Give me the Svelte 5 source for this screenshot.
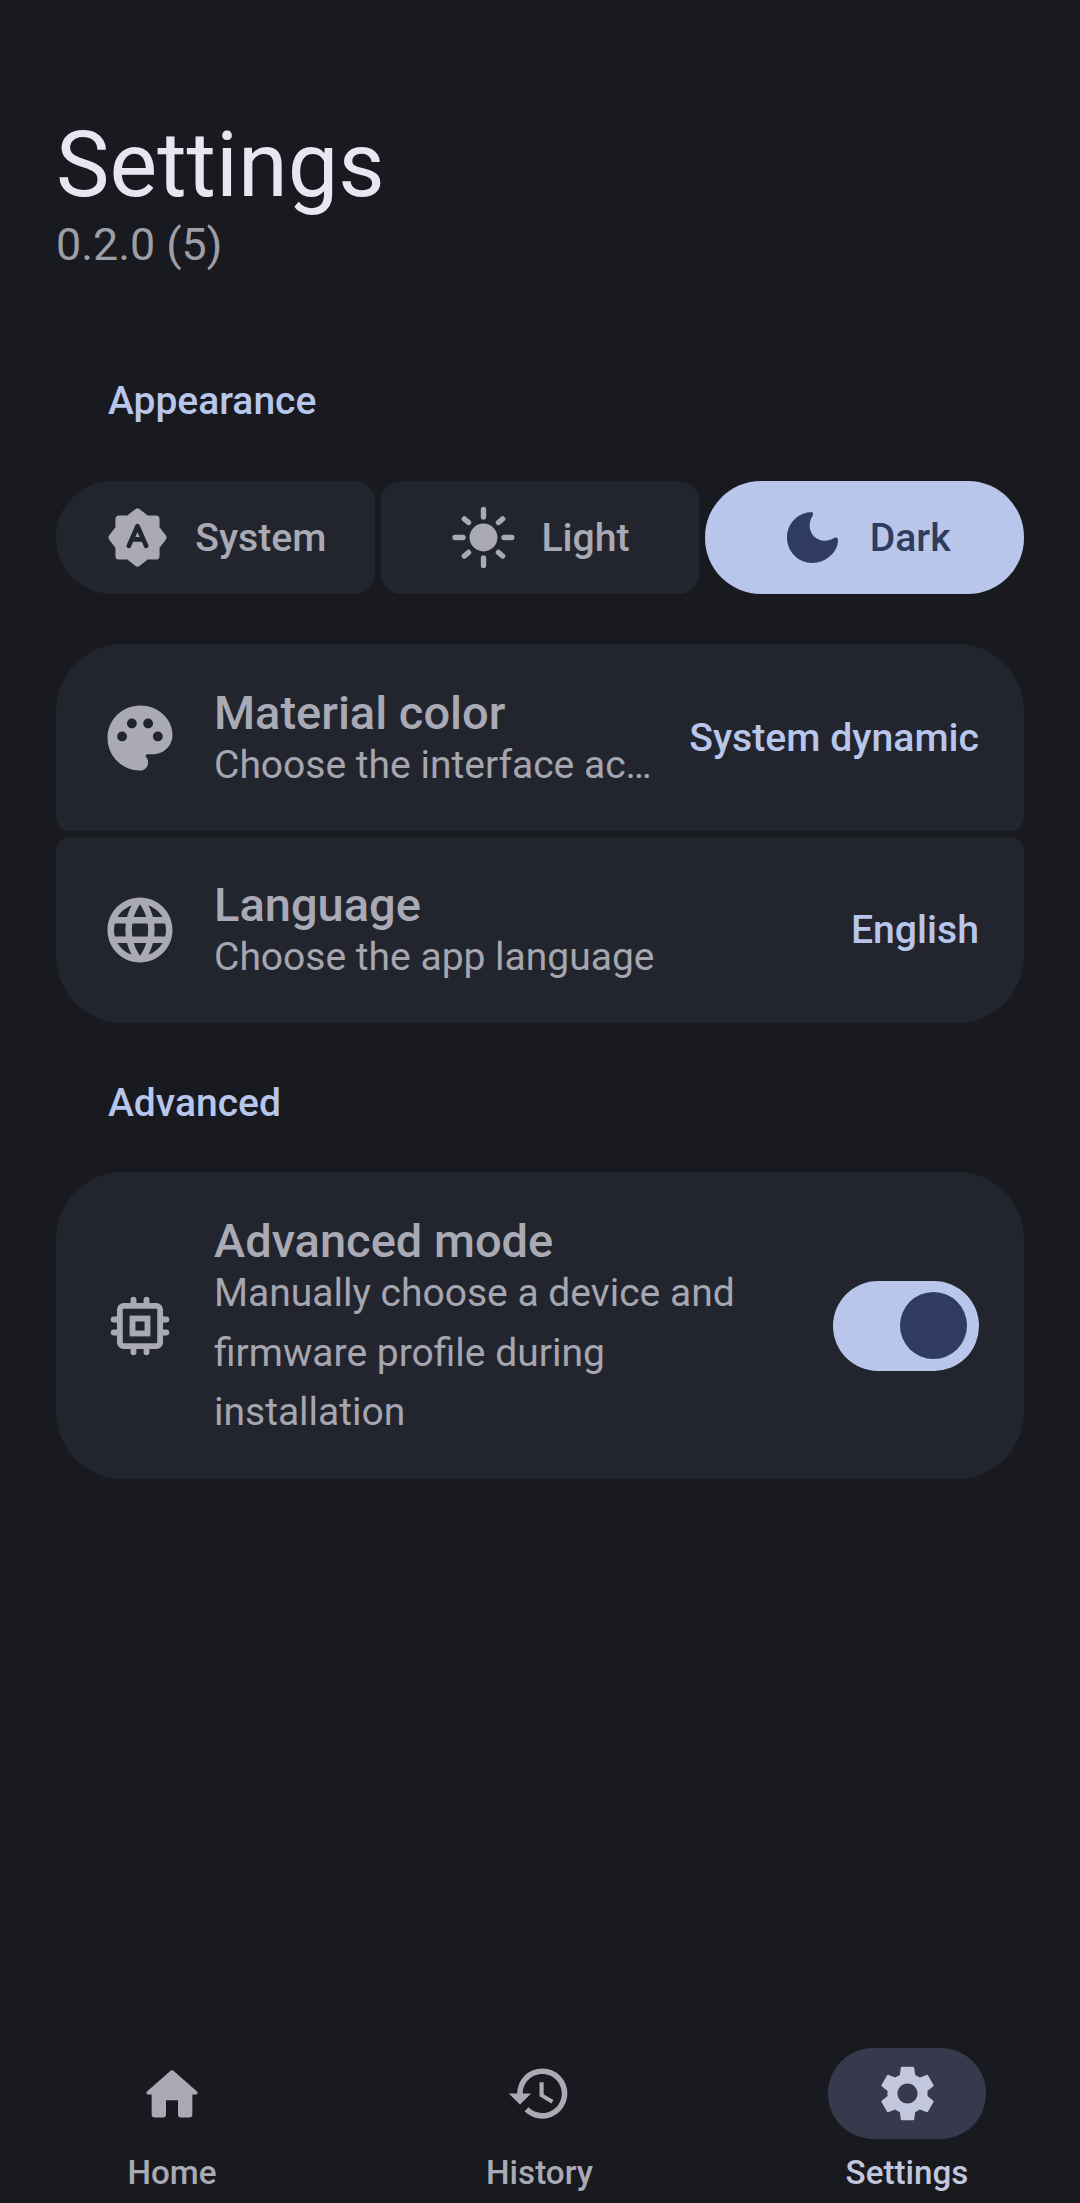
<script>
  let themes = [
    { id: 'system', label: 'System' },
    { id: 'light', label: 'Light' },
    { id: 'dark', label: 'Dark' }
  ];
  let selected = 'dark';
  let advanced = true;
</script>

<div class="page">
  <header class="head">
    <h1>Settings</h1>
    <p class="version">0.2.0 (5)</p>
  </header>

  <h2 class="section first">Appearance</h2>

  <div class="themes">
    {#each themes as theme}
      <button class="theme {theme.id}" class:active={selected === theme.id} on:click={() => (selected = theme.id)}>
        {#if theme.id === 'system'}
          <svg class="icon" viewBox="0 0 24 24">
            <path class="star" d="M12 2.9L15.2 5.4H18.6V8.8L21.1 12L18.6 15.2V18.6H15.2L12 21.1L8.8 18.6H5.4V15.2L2.9 12L5.4 8.8V5.4H8.8Z" />
            <path class="letter" d="M8.9 15L12 8L15.1 15M10 12.7H14" />
          </svg>
        {:else if theme.id === 'light'}
          <svg class="icon" viewBox="0 0 67.2 67.2">
            <circle cx="33.6" cy="33.6" r="14" fill="currentColor" />
            <path class="rays" d="M33.6 5.4V13M33.6 54.2V61.8M5 33.6H13M54.2 33.6H62M14.4 15L18.6 18.6M48.6 48.6L52.8 52.2M14.4 52.2L18.6 48.6M48.6 18.6L52.8 15" />
          </svg>
        {:else}
          <svg class="icon" viewBox="28 43 201 201">
            <path fill="currentColor" d="M128 67C86 67 52 101 52 143.5C52 186 86 220 128 220C170 220 205 186 205 152C205 144 198 141 193 145C184 151 175 153 165 153C140 153 120 133 120 108C120 98 123 88 128 80C132 73 130 67 125 67Z" />
          </svg>
        {/if}
        <span>{theme.label}</span>
      </button>
    {/each}
  </div>

  <div class="card top">
    <svg class="row-icon" viewBox="0 0 24 24">
      <path fill="currentColor" d="M12 2C6.49 2 2 6.49 2 12s4.49 10 10 10c1.38 0 2.5-1.12 2.5-2.5 0-.61-.23-1.2-.64-1.67-.08-.1-.13-.21-.13-.33 0-.28.22-.5.5-.5H16c3.31 0 6-2.69 6-6 0-4.96-4.49-9-10-9zm5.5 11c-.83 0-1.5-.67-1.5-1.5s.67-1.5 1.5-1.5 1.5.67 1.5 1.5-.67 1.5-1.5 1.5zm-3-4c-.83 0-1.5-.67-1.5-1.5S13.67 6 14.5 6s1.5.67 1.5 1.5S15.33 9 14.5 9zM5 11.5c0-.83.67-1.5 1.5-1.5s1.5.67 1.5 1.5S7.33 13 6.5 13 5 12.33 5 11.5zm6-4c0 .83-.67 1.5-1.5 1.5S8 8.33 8 7.5 8.67 6 9.5 6s1.5.67 1.5 1.5z" />
    </svg>
    <div class="text">
      <div class="title">Material color</div>
      <div class="sub nowrap">Choose the interface accent color</div>
    </div>
    <div class="value">System dynamic</div>
  </div>

  <div class="card bottom">
    <svg class="row-icon" viewBox="0 0 24 24">
      <path fill="currentColor" d="M11.99 2C6.47 2 2 6.48 2 12s4.47 10 9.99 10C17.52 22 22 17.52 22 12S17.52 2 11.99 2zm6.93 6h-2.95c-.32-1.25-.78-2.45-1.38-3.56 1.84.63 3.37 1.91 4.33 3.56zM12 4.04c.83 1.2 1.48 2.53 1.91 3.96h-3.82c.43-1.43 1.08-2.76 1.91-3.96zM4.26 14C4.1 13.36 4 12.69 4 12s.1-1.36.26-2h3.38c-.08.66-.14 1.32-.14 2s.06 1.34.14 2H4.26zm.82 2h2.95c.32 1.25.78 2.45 1.38 3.56-1.84-.63-3.37-1.9-4.33-3.56zm2.95-8H5.08c.96-1.66 2.49-2.93 4.33-3.56C8.81 5.55 8.35 6.75 8.03 8zM12 19.96c-.83-1.2-1.48-2.53-1.91-3.96h3.82c-.43 1.43-1.08 2.76-1.91 3.96zM14.34 14H9.66c-.09-.66-.16-1.32-.16-2s.07-1.35.16-2h4.68c.09.65.16 1.32.16 2s-.07 1.34-.16 2zm.25 5.56c.6-1.11 1.06-2.31 1.38-3.56h2.95c-.96 1.65-2.49 2.93-4.33 3.56zM16.36 14c.08-.66.14-1.32.14-2s-.06-1.34-.14-2h3.38c.16.64.26 1.31.26 2s-.1 1.36-.26 2h-3.38z" />
    </svg>
    <div class="text">
      <div class="title">Language</div>
      <div class="sub nowrap">Choose the app language</div>
    </div>
    <div class="value">English</div>
  </div>

  <h2 class="section second">Advanced</h2>

  <div class="card single">
    <svg class="row-icon chip" viewBox="0 0 24 24">
      <rect x="5.8" y="5.8" width="12.4" height="12.4" rx="1.2" />
      <rect x="9.7" y="9.7" width="4.6" height="4.6" />
      <path d="M10 3.9V5M14 3.9V5M10 19V20.1M14 19V20.1M3.9 10H5M3.9 14H5M19 10H20.1M19 14H20.1" />
    </svg>
    <div class="text">
      <div class="title">Advanced mode</div>
      <div class="sub">Manually choose a device and firmware profile during installation</div>
    </div>
    <button class="toggle" class:on={advanced} aria-label="Advanced mode" on:click={() => (advanced = !advanced)}>
      <span class="thumb"></span>
    </button>
  </div>

  <nav class="nav">
    <div class="nav-item">
      <div class="nav-icon">
        <svg width="52" height="48" viewBox="258 145 156 143">
          <path fill="currentColor" d="M330 148q6-5 12 0L411 209q5 7-3 9H397V278q0 9-9 9H363q-9 0-9-9V235H318V278q0 9-9 9H284q-9 0-9-9V218H264q-8-2-3-9Z" />
        </svg>
      </div>
      <span>Home</span>
    </div>
    <div class="nav-item">
      <div class="nav-icon">
        <svg width="67" height="67" viewBox="0 0 24 24">
          <path fill="currentColor" d="M13 3a9 9 0 0 0-9 9H1l3.89 3.89.07.14L9 12H6c0-3.87 3.13-7 7-7s7 3.13 7 7-3.13 7-7 7c-1.93 0-3.68-.79-4.94-2.06l-1.42 1.42A8.954 8.954 0 0 0 13 21a9 9 0 0 0 0-18zm-1 5v5l4.28 2.54.72-1.21-3.5-2.08V8H12z" />
        </svg>
      </div>
      <span>History</span>
    </div>
    <div class="nav-item active">
      <div class="nav-icon">
        <svg width="67" height="67" viewBox="0 0 24 24">
          <path fill="currentColor" d="M19.14 12.94c.04-.3.06-.61.06-.94 0-.32-.02-.64-.07-.94l2.03-1.58c.18-.14.23-.41.12-.61l-1.92-3.32c-.12-.22-.37-.29-.59-.22l-2.39.96c-.5-.38-1.03-.7-1.62-.94l-.36-2.54c-.04-.24-.24-.41-.48-.41h-3.84c-.24 0-.43.17-.47.41l-.36 2.54c-.59.24-1.13.57-1.62.94l-2.39-.96c-.22-.08-.47 0-.59.22L2.74 8.87c-.12.21-.08.47.12.61l2.03 1.58c-.05.3-.09.63-.09.94s.02.64.07.94l-2.03 1.58c-.18.14-.23.41-.12.61l1.92 3.32c.12.22.37.29.59.22l2.39-.96c.5.38 1.03.7 1.62.94l.36 2.54c.05.24.24.41.48.41h3.84c.24 0 .44-.17.47-.41l.36-2.54c.59-.24 1.13-.56 1.62-.94l2.39.96c.22.08.47 0 .59-.22l1.92-3.32c.12-.22.07-.47-.12-.61l-2.01-1.58zM12 15.6c-1.98 0-3.6-1.62-3.6-3.6s1.62-3.6 3.6-3.6 3.6 1.62 3.6 3.6-1.62 3.6-3.6 3.6z" />
        </svg>
      </div>
      <span>Settings</span>
    </div>
  </nav>
</div>

<style>
  :global(body) {
    background: #191a1f;
  }

  .page {
    display: flex;
    flex-direction: column;
    box-sizing: border-box;
    min-height: 2203px;
    padding: 0 56px;
    font-family: Roboto, "Liberation Sans", sans-serif;
    color: #a9aab5;
    background: #191a1f;
  }

  .head {
    padding-top: 116px;
  }

  h1 {
    margin: 0;
    font-size: 90px;
    line-height: 100px;
    font-weight: 400;
    color: #e6e7f3;
  }

  .version {
    margin: 1px 0 0;
    font-size: 44.8px;
    line-height: 56px;
    color: #9d9ea8;
  }

  .section {
    margin: 0;
    padding-left: 52px;
    font-size: 39px;
    line-height: 56px;
    font-weight: 500;
    color: #b8c6ec;
  }

  .section.first {
    margin-top: 100px;
  }

  .section.second {
    margin-top: 52px;
  }

  .themes {
    display: grid;
    grid-template-columns: repeat(3, 1fr);
    gap: 6px;
    margin-top: 52px;
  }

  .theme {
    display: flex;
    align-items: center;
    justify-content: center;
    gap: 24px;
    height: 113px;
    padding: 0;
    border: none;
    border-radius: 20px;
    background: #23252e;
    color: #a9aab5;
    font-family: inherit;
    font-size: 39.2px;
    font-weight: 500;
    cursor: pointer;
  }

  .theme.system {
    border-radius: 56px 20px 20px 56px;
  }

  .theme.active {
    border-radius: 56px;
    background: #b8c6ec;
    color: #2f3c5f;
  }

  .icon {
    width: 67px;
    height: 67px;
    flex-shrink: 0;
  }

  .star {
    fill: currentColor;
    stroke: currentColor;
    stroke-width: 2.6;
    stroke-linejoin: round;
  }

  .letter {
    fill: none;
    stroke: #23252e;
    stroke-width: 1.7;
    stroke-linecap: round;
    stroke-linejoin: round;
  }

  .rays {
    fill: none;
    stroke: currentColor;
    stroke-width: 5.4;
    stroke-linecap: round;
  }

  .card {
    display: flex;
    align-items: center;
    background: #23252e;
    padding: 0 45px;
  }

  .card.top {
    height: 187px;
    margin-top: 50px;
    border-radius: 67px 67px 14px 14px;
  }

  .card.bottom {
    height: 186px;
    margin-top: 6px;
    border-radius: 14px 14px 67px 67px;
  }

  .card.single {
    height: 307px;
    margin-top: 41px;
    border-radius: 67px;
  }

  .row-icon {
    width: 78px;
    height: 78px;
    flex-shrink: 0;
  }

  .chip {
    fill: none;
    stroke: currentColor;
    stroke-width: 1.8;
    stroke-linecap: round;
  }

  .text {
    flex: 1;
    min-width: 0;
    margin-left: 35px;
    padding-top: 10px;
  }

  .title {
    font-size: 47px;
    line-height: 46px;
    font-weight: 500;
  }

  .sub {
    font-size: 39px;
    line-height: 59.8px;
    color: #a5a6b0;
  }

  .nowrap {
    white-space: nowrap;
    overflow: hidden;
    text-overflow: ellipsis;
  }

  .value {
    flex-shrink: 0;
    margin-left: 34px;
    font-size: 39.2px;
    font-weight: 500;
    color: #b8c6ec;
  }

  .toggle {
    display: flex;
    align-items: center;
    justify-content: flex-start;
    flex-shrink: 0;
    box-sizing: border-box;
    width: 146px;
    height: 90px;
    margin-left: 40px;
    padding: 0 12px;
    border: none;
    border-radius: 45px;
    background: #3a3d4a;
    cursor: pointer;
  }

  .toggle.on {
    justify-content: flex-end;
    background: #b8c6ec;
  }

  .thumb {
    display: block;
    width: 67px;
    height: 67px;
    border-radius: 50%;
    background: #2f3c5f;
  }

  .nav {
    display: flex;
    justify-content: space-between;
    margin: auto -56px 0;
    padding: 0 94px 7px 93px;
  }

  .nav-item {
    display: flex;
    flex-direction: column;
    align-items: center;
    width: 158px;
    font-size: 33.2px;
    line-height: 47px;
    font-weight: 500;
    color: #a9aab5;
  }

  .nav-icon {
    display: flex;
    align-items: center;
    justify-content: center;
    width: 158px;
    height: 91px;
    margin-bottom: 10px;
    border-radius: 46px;
  }

  .nav-item.active {
    color: #c2c7de;
  }

  .nav-item.active .nav-icon {
    background: #363a4c;
  }
</style>
